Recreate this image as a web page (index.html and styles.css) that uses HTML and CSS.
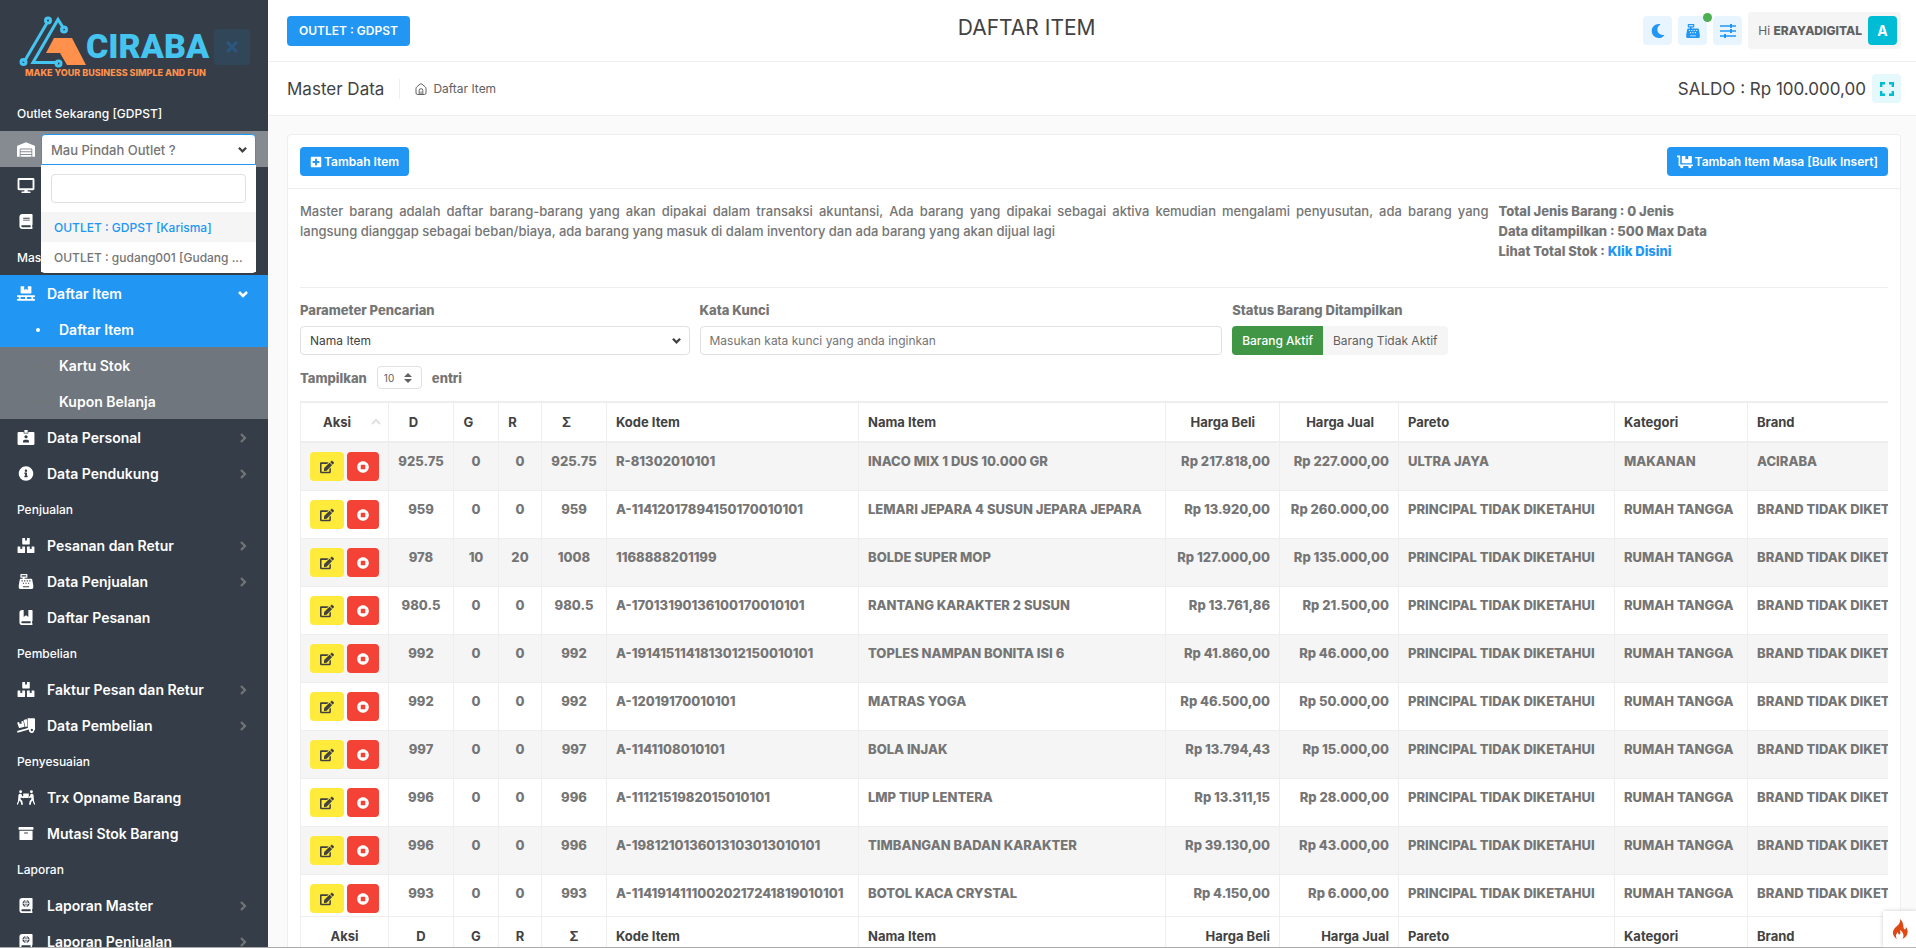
FILE: index.html
```html
<!DOCTYPE html>
<html lang="id">
<head>
  <meta charset="UTF-8">
  <meta name="viewport" content="width=device-width, initial-scale=1.0">
  <title>Daftar Item</title>
  <link rel="stylesheet" href="styles.css">
</head>
<body>
  <!-- icon set -->
  <svg class="sprite" aria-hidden="true">
    <symbol id="i-warehouse" viewBox="0 0 640 512"><path d="M504 352H136.400c-4.400 0-8 3.600-8 8l-.1 48c0 4.400 3.600 8 8 8H504c4.400 0 8-3.600 8-8v-48c0-4.400-3.600-8-8-8zm0 96H136.100c-4.400 0-8 3.600-8 8l-.1 48c0 4.400 3.600 8 8 8h368c4.400 0 8-3.600 8-8v-48c0-4.400-3.600-8-8-8zm0-192H136.600c-4.400 0-8 3.600-8 8l-.1 48c0 4.400 3.600 8 8 8H504c4.400 0 8-3.600 8-8v-48c0-4.400-3.600-8-8-8zm106.500-139L338.400 3.700a48.150 48.150 0 0 0-36.900 0L29.500 117C11.700 124.500 0 141.900 0 161.300V504c0 4.400 3.600 8 8 8h80c4.400 0 8-3.600 8-8V256c0-17.600 14.600-32 32.600-32h382.800c18 0 32.600 14.400 32.600 32v248c0 4.400 3.600 8 8 8h80c4.400 0 8-3.600 8-8V161.300c0-19.400-11.700-36.800-29.500-44.300z"/></symbol>
    <symbol id="i-desktop" viewBox="0 0 576 512"><path d="M528 0H48C21.500 0 0 21.500 0 48v320c0 26.500 21.500 48 48 48h192l-16 48h-72c-13.300 0-24 10.700-24 24s10.700 24 24 24h272c13.300 0 24-10.700 24-24s-10.700-24-24-24h-72l-16-48h192c26.500 0 48-21.500 48-48V48c0-26.500-21.500-48-48-48zm-16 352H64V64h448v288z"/></symbol>
    <symbol id="i-book" viewBox="0 0 448 512"><path d="M448 360V24c0-13.300-10.700-24-24-24H96C43 0 0 43 0 96v320c0 53 43 96 96 96h328c13.300 0 24-10.700 24-24v-16c0-7.500-3.500-14.300-8.900-18.700-4.200-15.400-4.200-59.300 0-74.700 5.400-4.300 8.900-11.100 8.900-18.600zM128 134c0-3.300 2.700-6 6-6h212c3.300 0 6 2.700 6 6v20c0 3.300-2.700 6-6 6H134c-3.300 0-6-2.700-6-6v-20zm0 64c0-3.300 2.700-6 6-6h212c3.300 0 6 2.700 6 6v20c0 3.300-2.700 6-6 6H134c-3.300 0-6-2.700-6-6v-20zm253.400 250H96c-17.700 0-32-14.300-32-32 0-17.600 14.400-32 32-32h285.400c-1.900 17.100-1.900 46.900 0 64z"/></symbol>
    <symbol id="i-pallet" viewBox="0 0 640 512"><path d="M144 256h352c8.800 0 16-7.200 16-16V16c0-8.800-7.200-16-16-16H384v128l-64-32-64 32V0H144c-8.800 0-16 7.200-16 16v224c0 8.800 7.200 16 16 16zm480 128c8.800 0 16-7.200 16-16v-32c0-8.800-7.200-16-16-16H16c-8.800 0-16 7.200-16 16v32c0 8.800 7.200 16 16 16h48v64H16c-8.800 0-16 7.200-16 16v32c0 8.800 7.200 16 16 16h608c8.800 0 16-7.200 16-16v-32c0-8.800-7.200-16-16-16h-48v-64h48zm-336 64H128v-64h160v64zm224 0H352v-64h160v64z"/></symbol>
    <symbol id="i-id" viewBox="0 0 576 512"><path fill-rule="evenodd" d="M40 64H208V120H368V64H536Q576 64 576 104V472Q576 512 536 512H40Q0 512 0 472V104Q0 64 40 64zM288 176a56 56 0 1 0 1 0zM184 424H392V400Q392 336 336 336H240Q184 336 184 400z"/><path d="M232 0h112v96H232z"/></symbol>
    <symbol id="i-info" viewBox="0 0 512 512"><path d="M256 8C119.043 8 8 119.083 8 256c0 136.997 111.043 248 248 248s248-111.003 248-248C504 119.083 392.957 8 256 8zm0 110c23.196 0 42 18.804 42 42s-18.804 42-42 42-42-18.804-42-42 18.804-42 42-42zm56 254c0 6.627-5.373 12-12 12h-88c-6.627 0-12-5.373-12-12v-24c0-6.627 5.373-12 12-12h12v-64h-12c-6.627 0-12-5.373-12-12v-24c0-6.627 5.373-12 12-12h64c6.627 0 12 5.373 12 12v100h12c6.627 0 12 5.373 12 12v24z"/></symbol>
    <symbol id="i-boxes" viewBox="0 0 576 512"><path d="M560 288h-80v96l-32-21.300-32 21.300v-96h-80c-8.800 0-16 7.200-16 16v192c0 8.800 7.200 16 16 16h224c8.800 0 16-7.200 16-16V304c0-8.800-7.200-16-16-16zm-384-64h224c8.800 0 16-7.200 16-16V16c0-8.800-7.200-16-16-16h-80v96l-32-21.300L256 96V0h-80c-8.800 0-16 7.200-16 16v192c0 8.800 7.200 16 16 16zm64 64h-80v96l-32-21.300L96 384v-96H16c-8.800 0-16 7.200-16 16v192c0 8.800 7.200 16 16 16h224c8.800 0 16-7.200 16-16V304c0-8.800-7.200-16-16-16z"/></symbol>
    <symbol id="i-cash" viewBox="0 0 512 512"><path fill-rule="evenodd" d="M80 0H288Q304 0 304 16V112Q304 128 288 128H208V160H436Q464 160 468 188L500 370Q504 380 504 400V464Q504 512 456 512H56Q8 512 8 464V400Q8 380 12 370L44 188Q48 160 76 160H144V128H80Q64 128 64 112V16Q64 0 80 0zM104 44V84H264V44zM104 216V256H144V216zM192 216V256H232V216zM280 216V256H320V216zM368 216V256H408V216zM148 296V336H188V296zM236 296V336H276V296zM324 296V336H364V296zM152 416V448H360V416z"/></symbol>
    <symbol id="i-bookmark" viewBox="0 0 448 512"><path fill-rule="evenodd" d="M96 0H144V240L224 180L304 240V0H424Q448 0 448 24V360Q448 376 432 384V448Q448 456 448 472V488Q448 512 424 512H96Q0 512 0 416V96Q0 0 96 0zM96 384Q64 388 64 416T96 448H382V384z"/></symbol>
    <symbol id="i-truck" viewBox="0 0 640 512"><path fill-rule="evenodd" d="M352 0H608Q640 0 640 32V416H616A96 96 0 1 1 430 396L18 512L0 450L384 346V32Q384 0 352 0zM528 374a42 42 0 1 0 1 0z"/><path d="M18 150L76 134L98 214L140 188L172 194L150 114L210 98Q224 96 228 110L272 300L96 348Q76 352 70 336L8 170Q6 154 18 150zM232 60L330 32L368 40V290L300 310z"/></symbol>
    <symbol id="i-carry" viewBox="0 0 640 512"><circle cx="128" cy="52" r="52"/><circle cx="512" cy="52" r="52"/><path d="M220 112H420V272H220zM96 120Q140 112 160 144L184 210L236 224V280L150 262L140 250L124 310L190 380L212 512H150L132 414L80 360L72 412L24 512H-10V490L36 390L50 180Q60 132 96 120zM544 120Q500 112 480 144L456 210L404 224V280L490 262L500 250L516 310L450 380L428 512H490L508 414L560 360L568 412L616 512H650V490L604 390L590 180Q580 132 544 120z"/></symbol>
    <symbol id="i-archive" viewBox="0 0 512 512"><path d="M32 448c0 17.700 14.300 32 32 32h384c17.700 0 32-14.300 32-32V160H32v288zm160-212c0-6.600 5.400-12 12-12h104c6.600 0 12 5.400 12 12v8c0 6.600-5.400 12-12 12H204c-6.600 0-12-5.400-12-12v-8zM480 32H32C14.300 32 0 46.300 0 64v48c0 8.800 7.200 16 16 16h480c8.800 0 16-7.200 16-16V64c0-17.700-14.300-32-32-32z"/></symbol>
    <symbol id="i-atlas" viewBox="0 0 448 512"><path fill-rule="evenodd" d="M96 0H424Q448 0 448 24V360Q448 376 432 384V448Q448 456 448 472V488Q448 512 424 512H96Q0 512 0 416V96Q0 0 96 0zM96 384Q64 388 64 416T96 448H382V384zM224 64a120 120 0 1 0 1 0z"/><path fill="none" stroke="currentColor" stroke-width="26" d="M104 184H344M224 64V304M224 72Q120 184 224 296Q328 184 224 72"/></symbol>
    <symbol id="i-moon" viewBox="0 0 512 512"><path d="M283.211 512c78.962 0 151.079-35.925 198.857-94.792 7.068-8.708-.639-21.430-11.562-19.350-124.203 23.654-238.262-71.576-238.262-196.954 0-72.222 38.662-138.635 101.498-174.394 9.686-5.512 7.250-20.197-3.756-22.230A258.156 258.156 0 0 0 283.211 0c-141.309 0-256 114.511-256 256 0 141.309 114.511 256 256 256z"/></symbol>
    <symbol id="i-sliders" viewBox="0 0 16 14"><path fill="none" stroke="currentColor" stroke-width="1.600" d="M0 2H16M0 7H16M0 12H16"/><path d="M10 0h2v4h-2zM10 5h2v4h-2zM4 10h2v4H4z"/></symbol>
    <symbol id="i-expand" viewBox="0 0 14 14"><path fill="none" stroke="currentColor" stroke-width="2.400" d="M1.200 5V1.200H5M9 1.200H12.800V5M12.800 9V12.800H9M5 12.800H1.200V9"/></symbol>
    <symbol id="i-home" viewBox="0 0 12 12"><path fill="none" stroke="currentColor" stroke-linejoin="round" d="M1 5.500Q1 4.600 1.700 4L5 1.200Q6 .4 7 1.200L10.300 4Q11 4.600 11 5.500V10Q11 11.500 9.500 11.500H2.500Q1 11.500 1 10zM4.200 11.500V7.300Q4.200 5.700 6 5.700T7.800 7.300V11.500M6 11.500V8.500"/></symbol>
    <symbol id="i-plus" viewBox="0 0 448 512"><path d="M400 32H48C21.500 32 0 53.500 0 80v352c0 26.500 21.500 48 48 48h352c26.500 0 48-21.500 48-48V80c0-26.500-21.500-48-48-48zm-32 252c0 6.600-5.400 12-12 12h-92v92c0 6.600-5.400 12-12 12h-56c-6.600 0-12-5.400-12-12v-92H92c-6.600 0-12-5.400-12-12v-56c0-6.600 5.400-12 12-12h92v-92c0-6.600 5.400-12 12-12h56c6.600 0 12 5.400 12 12v92h92c6.600 0 12 5.400 12 12v56z"/></symbol>
    <symbol id="i-dolly" viewBox="0 0 640 512"><path d="M0 0H112Q128 0 128 16V352H624Q640 352 640 368V400Q640 416 624 416H573A64 64 0 1 1 455 416H249A64 64 0 1 1 131 416H80Q64 416 64 400V64H0zM192 16H336V160L392 124L448 160V16H576Q592 16 592 32V304H192z"/></symbol>
    <symbol id="i-edit" viewBox="0 0 576 512"><path d="M402.600 83.200l90.200 90.200c3.800 3.800 3.800 10 0 13.800L274.400 405.600l-92.800 10.300c-12.400 1.400-22.900-9.100-21.500-21.500l10.300-92.800L388.800 83.200c3.800-3.800 10-3.800 13.800 0zm162-22.900l-48.800-48.800c-15.200-15.200-39.900-15.200-55.200 0l-35.400 35.400c-3.800 3.800-3.800 10 0 13.800l90.200 90.200c3.800 3.800 10 3.800 13.800 0l35.400-35.400c15.200-15.300 15.200-40 0-55.200zM384 346.200V448H64V128h229.800c3.200 0 6.200-1.300 8.500-3.500l40-40c7.600-7.600 2.200-20.500-8.500-20.500H48C21.500 64 0 85.500 0 112v352c0 26.500 21.500 48 48 48h352c26.500 0 48-21.500 48-48V306.200c0-10.700-12.900-16-20.500-8.500l-40 40c-2.200 2.300-3.500 5.300-3.500 8.500z"/></symbol>
    <symbol id="i-stop" viewBox="0 0 512 512"><path d="M256 8C119 8 8 119 8 256s111 248 248 248 248-111 248-248S393 8 256 8zm96 328c0 8.800-7.200 16-16 16H176c-8.800 0-16-7.200-16-16V176c0-8.800 7.200-16 16-16h160c8.800 0 16 7.200 16 16v160z"/></symbol>
    <symbol id="i-right" viewBox="0 0 10 10"><path fill="none" stroke="currentColor" stroke-width="2.200" d="M3 1L7 5L3 9"/></symbol>
    <symbol id="i-down" viewBox="0 0 10 10"><path fill="none" stroke="currentColor" stroke-width="2.600" d="M1 3L5 7L9 3"/></symbol>
    <symbol id="i-times" viewBox="0 0 12 12"><path fill="none" stroke="currentColor" stroke-width="3" d="M1 1L11 11M11 1L1 11"/></symbol>
    <symbol id="i-fire" viewBox="0 0 16 20"><path d="M8 0C9 4 6 6 3 9C0 12 0 17 5 20C3 17 4 15 6 13C6 15 7 16 8 15C9 14 8 12 8 11C11 13 13 17 10 20C16 18 17 12 14 8C14 10 13 11 12 10C11 8 12 3 8 0z"/></symbol>
  </svg>

  <div class="layout">
    <aside class="sidebar">
      <div class="sidebar-header">
        <svg class="logo" viewBox="0 0 194 64" role="img" aria-label="ACIRABA">
          <g class="logo-trace">
            <path d="M4 46L27 7M31 46.500L13 46.500L38 3.500L44 13M31 46.500H38"/>
            <circle cx="3.500" cy="46" r="2.500"/>
            <circle cx="28" cy="4.500" r="2.500"/>
            <circle cx="44" cy="13.500" r="2.500"/>
            <circle cx="38.500" cy="47.500" r="2.500"/>
          </g>
          <path class="logo-mark" d="M34 22H52L66 49H47L40 37H26z"/>
          <text class="logo-name" x="66" y="42">CIRABA</text>
          <text class="logo-tag" x="5" y="60">MAKE YOUR BUSINESS SIMPLE AND FUN</text>
        </svg>
        <button class="sidebar-close" type="button" aria-label="Tutup menu"><svg class="icon-12"><use href="#i-times"/></svg></button>
      </div>

      <nav class="menu">
        <div class="menu-section">Outlet Sekarang [GDPST]</div>
        <div class="menu-item outlet-row">
          <svg class="menu-icon"><use href="#i-warehouse"/></svg>
          <div class="outlet-picker">
            <select class="outlet-select" aria-label="Pindah outlet"><option>Mau Pindah Outlet ?</option></select>
            <div class="outlet-dropdown">
              <input class="outlet-search" type="search" aria-label="Cari outlet">
              <button class="outlet-option selected" type="button">OUTLET : GDPST [Karisma]</button>
              <button class="outlet-option" type="button">OUTLET : gudang001 [Gudang ...</button>
            </div>
          </div>
        </div>
        <a class="menu-item" href="#" aria-label="Dashboard"><svg class="menu-icon"><use href="#i-desktop"/></svg></a>
        <a class="menu-item" href="#" aria-label="Buku"><svg class="menu-icon"><use href="#i-book"/></svg></a>
        <div class="menu-section">Mas</div>
        <a class="menu-item active" href="#"><svg class="menu-icon"><use href="#i-pallet"/></svg><span>Daftar Item</span><svg class="menu-arrow"><use href="#i-down"/></svg></a>
        <div class="submenu">
          <a class="submenu-item active" href="#">Daftar Item</a>
          <a class="submenu-item" href="#">Kartu Stok</a>
          <a class="submenu-item" href="#">Kupon Belanja</a>
        </div>
        <a class="menu-item" href="#"><svg class="menu-icon"><use href="#i-id"/></svg><span>Data Personal</span><svg class="menu-arrow"><use href="#i-right"/></svg></a>
        <a class="menu-item" href="#"><svg class="menu-icon"><use href="#i-info"/></svg><span>Data Pendukung</span><svg class="menu-arrow"><use href="#i-right"/></svg></a>
        <div class="menu-section">Penjualan</div>
        <a class="menu-item" href="#"><svg class="menu-icon"><use href="#i-boxes"/></svg><span>Pesanan dan Retur</span><svg class="menu-arrow"><use href="#i-right"/></svg></a>
        <a class="menu-item" href="#"><svg class="menu-icon"><use href="#i-cash"/></svg><span>Data Penjualan</span><svg class="menu-arrow"><use href="#i-right"/></svg></a>
        <a class="menu-item" href="#"><svg class="menu-icon"><use href="#i-bookmark"/></svg><span>Daftar Pesanan</span></a>
        <div class="menu-section">Pembelian</div>
        <a class="menu-item" href="#"><svg class="menu-icon"><use href="#i-boxes"/></svg><span>Faktur Pesan dan Retur</span><svg class="menu-arrow"><use href="#i-right"/></svg></a>
        <a class="menu-item" href="#"><svg class="menu-icon"><use href="#i-truck"/></svg><span>Data Pembelian</span><svg class="menu-arrow"><use href="#i-right"/></svg></a>
        <div class="menu-section">Penyesuaian</div>
        <a class="menu-item" href="#"><svg class="menu-icon"><use href="#i-carry"/></svg><span>Trx Opname Barang</span></a>
        <a class="menu-item" href="#"><svg class="menu-icon"><use href="#i-archive"/></svg><span>Mutasi Stok Barang</span></a>
        <div class="menu-section">Laporan</div>
        <a class="menu-item" href="#"><svg class="menu-icon"><use href="#i-atlas"/></svg><span>Laporan Master</span><svg class="menu-arrow"><use href="#i-right"/></svg></a>
        <a class="menu-item" href="#"><svg class="menu-icon"><use href="#i-atlas"/></svg><span>Laporan Penjualan</span><svg class="menu-arrow"><use href="#i-right"/></svg></a>
      </nav>
    </aside>

    <div class="wrapper">
      <header class="topbar">
        <button class="btn btn-outlet" type="button">OUTLET : GDPST</button>
        <h1 class="page-title">DAFTAR ITEM</h1>
        <div class="top-actions">
          <button class="icon-btn" type="button" aria-label="Mode gelap"><svg class="icon-14"><use href="#i-moon"/></svg></button>
          <button class="icon-btn cashier" type="button" aria-label="Kasir"><svg class="icon-16"><use href="#i-cash"/></svg><span class="badge-dot"></span></button>
          <button class="icon-btn" type="button" aria-label="Pengaturan"><svg class="icon-16"><use href="#i-sliders"/></svg></button>
          <button class="user-btn" type="button"><span>Hi <b>ERAYADIGITAL</b></span><span class="avatar">A</span></button>
        </div>
      </header>

      <div class="subheader">
        <h2 class="subheader-title">Master Data</h2>
        <a class="breadcrumb" href="#"><svg class="icon-12"><use href="#i-home"/></svg>Daftar Item</a>
        <div class="saldo">SALDO : Rp 100.000,00</div>
        <button class="icon-btn info" type="button" aria-label="Layar penuh"><svg class="icon-14"><use href="#i-expand"/></svg></button>
      </div>

      <main class="content">
        <section class="card">
          <div class="card-header">
            <button class="btn" type="button"><svg class="icon-12"><use href="#i-plus"/></svg>Tambah Item</button>
            <button class="btn" type="button"><svg class="icon-16"><use href="#i-dolly"/></svg>Tambah Item Masa [Bulk Insert]</button>
          </div>
          <div class="card-body">
            <div class="row intro">
              <p class="col-9 intro-text">Master barang adalah daftar barang-barang yang akan dipakai dalam transaksi akuntansi, Ada barang yang dipakai sebagai aktiva kemudian mengalami penyusutan, ada barang yang langsung dianggap sebagai beban/biaya, ada barang yang masuk di dalam inventory dan ada barang yang akan dijual lagi</p>
              <div class="col-3 intro-stats">
                Total Jenis Barang : 0 Jenis<br>
                Data ditampilkan : 500 Max Data<br>
                Lihat Total Stok : <a href="#">Klik Disini</a>
              </div>
            </div>
            <hr class="divider">

            <form class="row filters">
              <div class="col-3">
                <label class="form-label" for="parameter">Parameter Pencarian</label>
                <select class="form-control form-select" id="parameter"><option>Nama Item</option></select>
              </div>
              <div class="col-4">
                <label class="form-label" for="keyword">Kata Kunci</label>
                <input class="form-control" id="keyword" type="text" placeholder="Masukan kata kunci yang anda inginkan">
              </div>
              <fieldset class="col-5 status">
                <legend class="form-label">Status Barang Ditampilkan</legend>
                <div class="btn-group">
                  <input type="radio" name="status" id="aktif" checked><label for="aktif">Barang Aktif</label>
                  <input type="radio" name="status" id="nonaktif"><label for="nonaktif">Barang Tidak Aktif</label>
                </div>
              </fieldset>
            </form>

            <label class="length">Tampilkan
              <span class="length-box">
                <select class="length-select"><option>10</option></select>
              </span>
              entri
            </label>

            <div class="table-scroll">
              <table class="items">
                <colgroup>
                  <col class="w-aksi"><col class="w-d"><col class="w-g"><col class="w-r"><col class="w-d">
                  <col class="w-kode"><col class="w-nama"><col class="w-beli"><col class="w-jual">
                  <col class="w-pareto"><col class="w-kategori"><col class="w-brand">
                </colgroup>
                <thead>
                  <tr>
                    <th class="c sorted">Aksi<svg class="sort-icon" viewBox="0 0 10 10"><path d="M1 7L5 3L9 7"/></svg></th><th class="c">D</th><th class="c">G</th><th class="c">R</th><th class="c">Σ</th>
                    <th>Kode Item</th><th>Nama Item</th><th class="r">Harga Beli</th><th class="r">Harga Jual</th><th>Pareto</th><th>Kategori</th><th>Brand</th>
                  </tr>
                </thead>
                <tbody>
                  <tr>
                    <td><div class="actions"><button class="act edit" type="button" aria-label="Ubah"><svg class="icon-14"><use href="#i-edit"/></svg></button><button class="act stop" type="button" aria-label="Nonaktifkan"><svg class="icon-12"><use href="#i-stop"/></svg></button></div></td>
                    <td class="c">925.75</td><td class="c">0</td><td class="c">0</td><td class="c">925.75</td><td>R-81302010101</td><td>INACO MIX 1 DUS 10.000 GR</td><td class="r">Rp 217.818,00</td><td class="r">Rp 227.000,00</td><td>ULTRA JAYA</td><td>MAKANAN</td><td>ACIRABA</td>
                  </tr>
                  <tr>
                    <td><div class="actions"><button class="act edit" type="button" aria-label="Ubah"><svg class="icon-14"><use href="#i-edit"/></svg></button><button class="act stop" type="button" aria-label="Nonaktifkan"><svg class="icon-12"><use href="#i-stop"/></svg></button></div></td>
                    <td class="c">959</td><td class="c">0</td><td class="c">0</td><td class="c">959</td><td>A-11412017894150170010101</td><td>LEMARI JEPARA 4 SUSUN JEPARA JEPARA</td><td class="r">Rp 13.920,00</td><td class="r">Rp 260.000,00</td><td>PRINCIPAL TIDAK DIKETAHUI</td><td>RUMAH TANGGA</td><td>BRAND TIDAK DIKETAHUI</td>
                  </tr>
                  <tr>
                    <td><div class="actions"><button class="act edit" type="button" aria-label="Ubah"><svg class="icon-14"><use href="#i-edit"/></svg></button><button class="act stop" type="button" aria-label="Nonaktifkan"><svg class="icon-12"><use href="#i-stop"/></svg></button></div></td>
                    <td class="c">978</td><td class="c">10</td><td class="c">20</td><td class="c">1008</td><td>1168888201199</td><td>BOLDE SUPER MOP</td><td class="r">Rp 127.000,00</td><td class="r">Rp 135.000,00</td><td>PRINCIPAL TIDAK DIKETAHUI</td><td>RUMAH TANGGA</td><td>BRAND TIDAK DIKETAHUI</td>
                  </tr>
                  <tr>
                    <td><div class="actions"><button class="act edit" type="button" aria-label="Ubah"><svg class="icon-14"><use href="#i-edit"/></svg></button><button class="act stop" type="button" aria-label="Nonaktifkan"><svg class="icon-12"><use href="#i-stop"/></svg></button></div></td>
                    <td class="c">980.5</td><td class="c">0</td><td class="c">0</td><td class="c">980.5</td><td>A-17013190136100170010101</td><td>RANTANG KARAKTER 2 SUSUN</td><td class="r">Rp 13.761,86</td><td class="r">Rp 21.500,00</td><td>PRINCIPAL TIDAK DIKETAHUI</td><td>RUMAH TANGGA</td><td>BRAND TIDAK DIKETAHUI</td>
                  </tr>
                  <tr>
                    <td><div class="actions"><button class="act edit" type="button" aria-label="Ubah"><svg class="icon-14"><use href="#i-edit"/></svg></button><button class="act stop" type="button" aria-label="Nonaktifkan"><svg class="icon-12"><use href="#i-stop"/></svg></button></div></td>
                    <td class="c">992</td><td class="c">0</td><td class="c">0</td><td class="c">992</td><td>A-1914151141813012150010101</td><td>TOPLES NAMPAN BONITA ISI 6</td><td class="r">Rp 41.860,00</td><td class="r">Rp 46.000,00</td><td>PRINCIPAL TIDAK DIKETAHUI</td><td>RUMAH TANGGA</td><td>BRAND TIDAK DIKETAHUI</td>
                  </tr>
                  <tr>
                    <td><div class="actions"><button class="act edit" type="button" aria-label="Ubah"><svg class="icon-14"><use href="#i-edit"/></svg></button><button class="act stop" type="button" aria-label="Nonaktifkan"><svg class="icon-12"><use href="#i-stop"/></svg></button></div></td>
                    <td class="c">992</td><td class="c">0</td><td class="c">0</td><td class="c">992</td><td>A-12019170010101</td><td>MATRAS YOGA</td><td class="r">Rp 46.500,00</td><td class="r">Rp 50.000,00</td><td>PRINCIPAL TIDAK DIKETAHUI</td><td>RUMAH TANGGA</td><td>BRAND TIDAK DIKETAHUI</td>
                  </tr>
                  <tr>
                    <td><div class="actions"><button class="act edit" type="button" aria-label="Ubah"><svg class="icon-14"><use href="#i-edit"/></svg></button><button class="act stop" type="button" aria-label="Nonaktifkan"><svg class="icon-12"><use href="#i-stop"/></svg></button></div></td>
                    <td class="c">997</td><td class="c">0</td><td class="c">0</td><td class="c">997</td><td>A-1141108010101</td><td>BOLA INJAK</td><td class="r">Rp 13.794,43</td><td class="r">Rp 15.000,00</td><td>PRINCIPAL TIDAK DIKETAHUI</td><td>RUMAH TANGGA</td><td>BRAND TIDAK DIKETAHUI</td>
                  </tr>
                  <tr>
                    <td><div class="actions"><button class="act edit" type="button" aria-label="Ubah"><svg class="icon-14"><use href="#i-edit"/></svg></button><button class="act stop" type="button" aria-label="Nonaktifkan"><svg class="icon-12"><use href="#i-stop"/></svg></button></div></td>
                    <td class="c">996</td><td class="c">0</td><td class="c">0</td><td class="c">996</td><td>A-1112151982015010101</td><td>LMP TIUP LENTERA</td><td class="r">Rp 13.311,15</td><td class="r">Rp 28.000,00</td><td>PRINCIPAL TIDAK DIKETAHUI</td><td>RUMAH TANGGA</td><td>BRAND TIDAK DIKETAHUI</td>
                  </tr>
                  <tr>
                    <td><div class="actions"><button class="act edit" type="button" aria-label="Ubah"><svg class="icon-14"><use href="#i-edit"/></svg></button><button class="act stop" type="button" aria-label="Nonaktifkan"><svg class="icon-12"><use href="#i-stop"/></svg></button></div></td>
                    <td class="c">996</td><td class="c">0</td><td class="c">0</td><td class="c">996</td><td>A-1981210136013103013010101</td><td>TIMBANGAN BADAN KARAKTER</td><td class="r">Rp 39.130,00</td><td class="r">Rp 43.000,00</td><td>PRINCIPAL TIDAK DIKETAHUI</td><td>RUMAH TANGGA</td><td>BRAND TIDAK DIKETAHUI</td>
                  </tr>
                  <tr>
                    <td><div class="actions"><button class="act edit" type="button" aria-label="Ubah"><svg class="icon-14"><use href="#i-edit"/></svg></button><button class="act stop" type="button" aria-label="Nonaktifkan"><svg class="icon-12"><use href="#i-stop"/></svg></button></div></td>
                    <td class="c">993</td><td class="c">0</td><td class="c">0</td><td class="c">993</td><td>A-11419141110020217241819010101</td><td>BOTOL KACA CRYSTAL</td><td class="r">Rp 4.150,00</td><td class="r">Rp 6.000,00</td><td>PRINCIPAL TIDAK DIKETAHUI</td><td>RUMAH TANGGA</td><td>BRAND TIDAK DIKETAHUI</td>
                  </tr>
                </tbody>
                <tfoot>
                  <tr>
                    <th class="c">Aksi</th><th class="c">D</th><th class="c">G</th><th class="c">R</th><th class="c">Σ</th>
                    <th>Kode Item</th><th>Nama Item</th><th class="r">Harga Beli</th><th class="r">Harga Jual</th><th>Pareto</th><th>Kategori</th><th>Brand</th>
                  </tr>
                </tfoot>
              </table>
            </div>
          </div>
        </section>
      </main>
    </div>
  </div>

  <button class="debug-btn" type="button" aria-label="Debug toolbar"><svg class="fire"><use href="#i-fire"/></svg></button>
</body>
</html>
```
FILE: styles.css
```css
* {
  box-sizing: border-box;
}

body {
  margin: 0;
  font-family: Inter, "Liberation Sans", sans-serif;
  font-size: 13px;
  line-height: 20px;
  color: #757575;
  background: #fafafa;
}

button,
input,
select {
  font-family: inherit;
  margin: 0;
}

button {
  border: none;
  cursor: pointer;
}

a {
  color: #2196f3;
  text-decoration: none;
}

svg {
  fill: currentColor;
  flex-shrink: 0;
}

.sprite {
  display: none;
}

.icon-12 {
  width: 12px;
  height: 12px;
}

.icon-14 {
  width: 14px;
  height: 14px;
}

.icon-16 {
  width: 16px;
  height: 14px;
}

.layout {
  display: grid;
  grid-template-columns: 268px minmax(0, 1fr);
  height: 100vh;
  overflow: hidden;
  border-bottom: 1px solid #a9a9a9;
}

/* sidebar */
.sidebar {
  background: #343d48;
  color: #fff;
  overflow: hidden;
}

.sidebar-header {
  display: flex;
  align-items: center;
  height: 95px;
  padding-left: 20px;
}

.logo {
  width: 194px;
  height: 64px;
  overflow: visible;
}

.logo-trace {
  fill: none;
  stroke: #45c4f0;
  stroke-width: 3;
}

.logo-mark {
  fill: #ff914d;
}

.logo-name {
  fill: #45c4f0;
  font-family: Roboto, "Liberation Sans", sans-serif;
  font-size: 34px;
  font-weight: 900;
}

.logo-tag {
  fill: #ff914d;
  font-size: 9px;
  font-weight: 800;
}

.sidebar-close {
  display: flex;
  align-items: center;
  justify-content: center;
  width: 36px;
  height: 36px;
  margin-bottom: 1px;
  border-radius: 4px;
  background: #32465a;
  color: #2b5680;
}

.menu-section,
.menu-item,
.submenu-item {
  display: flex;
  align-items: center;
  height: 36px;
  padding: 1px 20px 0 17px;
  color: #fff;
  font-weight: 500;
}

.menu-section {
  font-size: 12px;
}

.menu-item,
.submenu-item {
  font-size: 14px;
  font-weight: 600;
}

.menu-item {
  gap: 12px;
}

.menu-icon {
  width: 18px;
  height: 15px;
}

.menu-arrow {
  width: 10px;
  height: 10px;
  margin-left: auto;
  color: #757575;
}

.menu-item.active,
.submenu-item.active {
  background: #2196f3;
}

.menu-item.active .menu-arrow {
  color: #fff;
}

.submenu {
  background: #70767e;
}

.submenu-item {
  gap: 19px;
  padding-left: 36px;
}

.submenu-item::before {
  content: '';
  width: 4px;
  height: 4px;
  border-radius: 50%;
  background: #757575;
}

.submenu-item.active::before {
  background: #fff;
}

.outlet-row {
  gap: 6px;
  padding-right: 12px;
  background: #868b91;
}

.outlet-picker {
  position: relative;
  flex: 1;
}

.outlet-select,
.form-select {
  appearance: none;
  background: #fff url("data:image/svg+xml,%3Csvg xmlns='http://www.w3.org/2000/svg' viewBox='0 0 10 10'%3E%3Cpath fill='none' stroke='%23424242' stroke-width='2.500' d='M1 3L5 7L9 3'/%3E%3C/svg%3E") no-repeat right 8px center / 9px 9px;
}

.outlet-select {
  display: block;
  width: 100%;
  height: 31px;
  padding: 0 9px;
  border: 1px solid #2196f3;
  border-radius: 4px 4px 0 0;
  color: #757575;
  font-size: 13px;
  font-weight: 500;
}

.outlet-dropdown {
  position: absolute;
  top: 31px;
  left: 0;
  right: 0;
  z-index: 5;
  padding: 9px 0 1px;
  border-radius: 0 0 4px 4px;
  background: #fff;
}

.outlet-search {
  display: block;
  width: calc(100% - 20px);
  height: 29px;
  margin: 0 10px 9px;
  border: 1px solid #e0e0e0;
  border-radius: 4px;
}

.outlet-option {
  display: block;
  width: 100%;
  height: 30px;
  padding: 0 13px;
  background: #fff;
  color: #757575;
  font-size: 12px;
  font-weight: 500;
  text-align: left;
  white-space: nowrap;
}

.outlet-option.selected {
  background: #f5f5f5;
  color: #2196f3;
}

/* top bars */
.wrapper {
  min-width: 0;
}

.topbar,
.subheader {
  display: flex;
  align-items: center;
  padding: 0 15px 0 19px;
  background: #fff;
  border-bottom: 1px solid #eee;
}

.topbar {
  justify-content: space-between;
  height: 62px;
}

.subheader {
  height: 54px;
}

.btn {
  display: inline-flex;
  align-items: center;
  gap: 2px;
  height: 29px;
  padding: 0 10px;
  border-radius: 4px;
  background: #2196f3;
  color: #fff;
  font-size: 12px;
  font-weight: 600;
}

.btn-outlet {
  height: 30px;
  padding: 0 12px;
}

.page-title {
  margin: 0 0 6px;
  color: #424242;
  font-size: 21px;
  font-weight: 400;
}

.top-actions {
  display: flex;
  align-items: center;
  gap: 6px;
}

.icon-btn {
  display: flex;
  align-items: center;
  justify-content: center;
  width: 29px;
  height: 29px;
  padding: 0;
  border-radius: 4px;
  background: #e9f5fe;
  color: #2196f3;
}

.icon-btn.info {
  background: #e5f8fb;
  color: #00bcd4;
}

.cashier {
  position: relative;
}

.badge-dot {
  position: absolute;
  top: -3px;
  right: -5px;
  width: 9px;
  height: 9px;
  border-radius: 50%;
  background: #4caf50;
}

.user-btn {
  display: flex;
  align-items: center;
  gap: 6px;
  height: 37px;
  padding: 0 4px 0 10px;
  border-radius: 4px;
  background: #f5f5f5;
  color: #616161;
  font-size: 12px;
}

.user-btn b {
  font-weight: 800;
}

.avatar {
  width: 29px;
  border-radius: 4px;
  background: #00bcd4;
  color: #fff;
  font-size: 14px;
  font-weight: 700;
  line-height: 29px;
}

.subheader-title,
.saldo {
  margin: 0;
  color: #424242;
  font-size: 17px;
  font-weight: 400;
}

.breadcrumb {
  display: flex;
  align-items: center;
  gap: 6px;
  margin-left: 15px;
  padding-left: 15px;
  border-left: 1px solid #eee;
  color: #616161;
  font-size: 12px;
}

.saldo {
  margin-left: auto;
  margin-right: 6px;
}

/* card */
.content {
  padding: 18px 15px 0 19px;
}

.card {
  border: 1px solid #eee;
  border-radius: 4px;
  background: #fff;
}

.card-header {
  display: flex;
  justify-content: space-between;
  padding: 12px;
  border-bottom: 1px solid #eee;
}

.card-body {
  padding: 12px;
}

.row {
  display: flex;
  margin: 0 -5px;
}

.row > * {
  padding: 0 5px;
}

.col-3 {
  width: 25%;
}

.col-4 {
  width: 33.3333%;
}

.col-5 {
  width: 41.6667%;
}

.col-9 {
  width: 75%;
}

.intro {
  min-height: 86px;
}

.intro-text {
  margin: 0;
  font-weight: 500;
  text-align: justify;
}

.intro-stats {
  font-weight: 800;
}

.divider {
  margin: 0 0 12px;
  border: none;
  border-top: 1px solid #eee;
}

.form-label {
  display: block;
  margin-bottom: 6px;
  padding: 0;
  font-weight: 800;
}

.form-control {
  display: block;
  width: 100%;
  height: 29px;
  padding: 0 9px;
  border: 1px solid #e0e0e0;
  border-radius: 4px;
  background-color: #fff;
  color: #424242;
  font-size: 12px;
}

.form-control::placeholder {
  color: #757575;
}

.status {
  margin: 0;
  border: none;
}

.btn-group {
  display: flex;
}

.btn-group input {
  position: absolute;
  opacity: 0;
}

.btn-group label {
  padding: 0 10px;
  background: #f5f5f5;
  color: #616161;
  font-size: 12px;
  line-height: 29px;
  border-radius: 0 4px 4px 0;
}

.btn-group input:checked + label {
  background: #419645;
  color: #fff;
  font-weight: 500;
  border-radius: 4px 0 0 4px;
}

.length {
  display: flex;
  align-items: center;
  gap: 10px;
  margin: 11px 0 12px;
  font-weight: 800;
}

.length-box {
  display: flex;
}

.length-select {
  appearance: none;
  width: 45px;
  height: 23px;
  padding: 0 6px;
  border: 1px solid #e0e0e0;
  border-radius: 4px;
  background: #fff url("data:image/svg+xml,%3Csvg xmlns='http://www.w3.org/2000/svg' viewBox='0 0 8 10'%3E%3Cpath fill='%23616161' d='M4 0L8 4H0zM4 10L8 6H0z'/%3E%3C/svg%3E") no-repeat right 9px center / 8px 10px;
  color: #616161;
  font-size: 10px;
}

.table-scroll {
  overflow: hidden;
}

/* items table */
.items {
  width: 1647px;
  table-layout: fixed;
  border-collapse: collapse;
  font-weight: 800;
}

.w-aksi { width: 88px; }
.w-d { width: 65px; }
.w-g { width: 45px; }
.w-r { width: 43px; }
.w-kode { width: 252px; }
.w-nama { width: 307px; }
.w-beli { width: 114px; }
.w-jual { width: 119px; }
.w-pareto { width: 216px; }
.w-kategori { width: 133px; }
.w-brand { width: 200px; }

.items th,
.items td {
  padding: 9px;
  border: 1px solid #eee;
  text-align: left;
  vertical-align: top;
  white-space: nowrap;
}

.items th {
  color: #424242;
  font-weight: 700;
}

.items td {
  line-height: 18px;
}

.items thead th {
  position: relative;
  padding-right: 24px;
  border-top-width: 2px;
  border-bottom-width: 2px;
}

.items .c {
  text-align: center;
}

.items .r {
  text-align: right;
}

.items tbody tr:nth-child(odd) {
  background: #f5f5f5;
}

.items tbody tr:last-child td {
  padding-bottom: 3px;
}

.sort-icon {
  position: absolute;
  top: 14px;
  right: 7px;
  width: 10px;
  height: 10px;
  fill: none;
  stroke: #e0e0e0;
  stroke-width: 2;
}

.actions {
  display: flex;
  gap: 3px;
}

.act {
  display: flex;
  align-items: center;
  justify-content: center;
  height: 29px;
  padding: 0;
  border-radius: 4px;
}

.act.edit {
  width: 34px;
  background: #ffeb3b;
  color: #424242;
}

.act.stop {
  width: 32px;
  background: #f44336;
  color: #fff;
}

.debug-btn {
  position: fixed;
  right: 0;
  bottom: 1px;
  display: flex;
  align-items: center;
  justify-content: center;
  width: 33px;
  height: 36px;
  padding: 0;
  background: #fff;
  color: #dd4814;
  box-shadow: 0 0 4px #ccc;
}

.fire {
  width: 16px;
  height: 20px;
}
```
